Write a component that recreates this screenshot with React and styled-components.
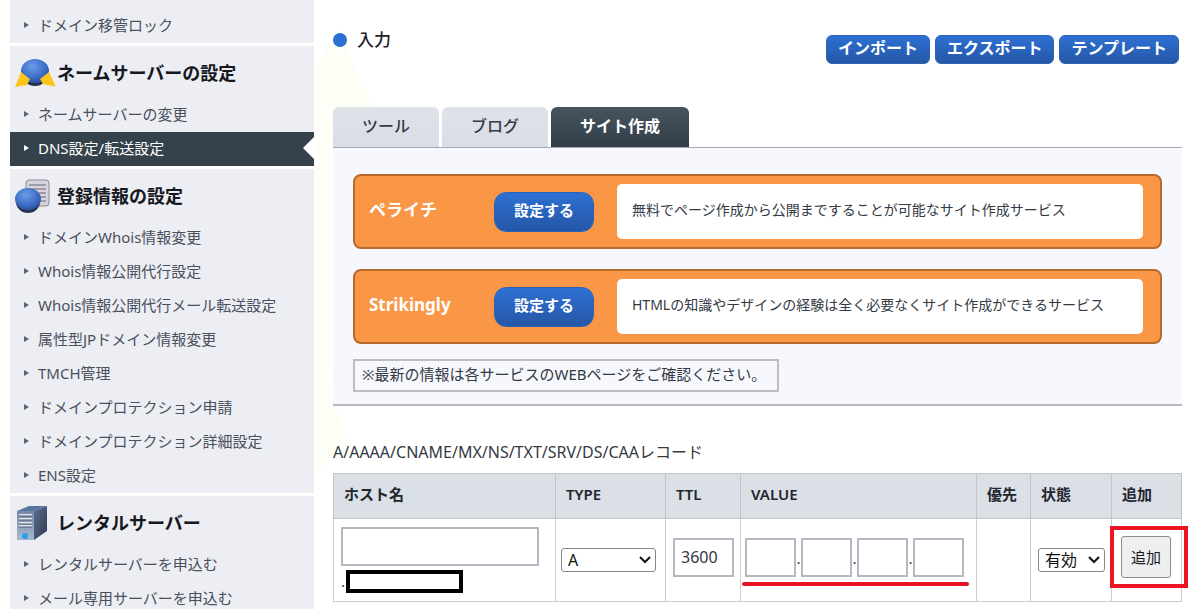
import React, { useState } from "react";
import styled, { createGlobalStyle } from "styled-components";

const GlobalStyle = createGlobalStyle`
  * {
    box-sizing: border-box;
  }
  body {
    margin: 0;
    background-color: #ffffff;
    color: #333a44;
    font-family: "Noto Sans", "Noto Sans CJK JP", sans-serif;
    font-size: 15px;
    line-height: 24px;
  }
  button, input, select {
    font-family: inherit;
  }
`;

const Page = styled.div`
  position: relative;
  display: flex;
  height: 100vh;
  padding-left: 10px;
  overflow: hidden;
`;

const Backdrop = styled.svg`
  position: absolute;
  top: 0;
  left: 315px;
  z-index: -1;
  fill: #fdfff7;
`;

const Sidebar = styled.nav`
  display: flex;
  flex-direction: column;
  flex-shrink: 0;
  gap: 3px;
  width: 304px;
`;

const Section = styled.section`
  flex-shrink: 0;
  padding-top: ${props => (props.$continued ? "9px" : "0")};
  background-color: #eceef4;
`;

const SectionTitle = styled.h2`
  display: flex;
  align-items: center;
  gap: 2px;
  height: 52px;
  margin: 0;
  padding: 2px 0 0 5px;
  color: #16181d;
  font-size: 18px;
  font-weight: 600;

  svg {
    flex-shrink: 0;
  }
`;

const Menu = styled.ul`
  margin: 0;
  padding: 0;
  list-style: none;
`;

const MenuLink = styled.a`
  display: flex;
  align-items: center;
  gap: 9px;
  height: 34px;
  padding: 0 0 2px 14px;
  background-color: ${props => (props.$active ? "#36424b" : "transparent")};
  color: ${props => (props.$active ? "#ffffff" : "#4a505b")};
  text-decoration: none;

  &::before {
    content: "";
    border-style: solid;
    border-width: 3px 0 3px 5px;
    border-color: transparent transparent transparent
      ${props => (props.$active ? "#ffffff" : "#566475")};
  }

  &::after {
    content: "";
    display: ${props => (props.$active ? "block" : "none")};
    margin-left: auto;
    border-style: solid;
    border-width: 11px 11px 11px 0;
    border-color: transparent #ffffff transparent transparent;
  }
`;

const Main = styled.main`
  flex: 1;
  min-width: 0;
  padding: 28px 18px 0 19px;
`;

const Header = styled.header`
  display: flex;
  justify-content: space-between;
  height: 79px;
`;

const Title = styled.h1`
  display: flex;
  align-items: center;
  gap: 10px;
  height: 24px;
  margin: 0;
  color: #1d2026;
  font-size: 17px;
  font-weight: 500;

  &::before {
    content: "";
    width: 14px;
    height: 14px;
    border-radius: 50%;
    background-color: #2b6fd1;
  }
`;

const Actions = styled.div`
  display: flex;
  gap: 5px;
  padding: 7px 3px 0 0;
`;

const BlueButton = styled.button`
  flex-shrink: 0;
  width: ${props => (props.$large ? "100px" : "auto")};
  height: ${props => (props.$large ? "40px" : "29px")};
  padding: ${props => (props.$large ? "0 0 3px" : "0 11px 3px")};
  border: 1px solid #2c62b4;
  border-radius: ${props => (props.$large ? "12px" : "6px")};
  background-image: linear-gradient(#2d70d4, #2557a5);
  color: #ffffff;
  font-size: ${props => (props.$large ? "15px" : "16px")};
  font-weight: 700;
  line-height: 24px;
`;

const Tabs = styled.div`
  display: flex;
  gap: 3px;
`;

const Tab = styled.button`
  height: 40px;
  padding: 0 29px 4px;
  border: 0;
  border-radius: 6px 6px 0 0;
  background-image: ${props =>
    props.$active
      ? "linear-gradient(#48545d, #323f48)"
      : "linear-gradient(#dfe2e9, #dadde5)"};
  color: ${props => (props.$active ? "#ffffff" : "#333c47")};
  font-size: 16px;
  font-weight: ${props => (props.$active ? 700 : 500)};
`;

const Panel = styled.section`
  display: flex;
  flex-direction: column;
  gap: 20px;
  padding: 26px 20px 12px;
  border-top: 1px solid #a5a9b2;
  border-bottom: 2px solid #b7bac6;
  background-color: #f7f8fd;
`;

const ServiceCard = styled.article`
  display: flex;
  align-items: center;
  height: 75px;
  padding: 0 17px 0 14px;
  border: 2px solid #b8692b;
  border-radius: 8px;
  background-color: #f99746;
`;

const ServiceName = styled.h3`
  flex-shrink: 0;
  width: 125px;
  margin: 0;
  padding-bottom: 3px;
  color: #ffffff;
  font-size: 17px;
  font-weight: 700;
`;

const ServiceText = styled.p`
  flex: 1;
  margin: 0 0 0 23px;
  padding: 14px 15px 17px;
  border-radius: 5px;
  background-color: #ffffff;
  font-size: 14px;
`;

const Note = styled.p`
  align-self: flex-start;
  width: 426px;
  margin: -5px 0 0;
  padding: 1px 7px 4px;
  border: 2px solid #bcbdbd;
`;

const RecordTable = styled.table`
  width: 100%;
  table-layout: fixed;
  border-collapse: collapse;

  caption {
    padding: 34px 0 9px;
    font-size: 16px;
    text-align: left;
  }
`;

const HeadCell = styled.th`
  width: ${props => props.$width || "auto"};
  height: 45px;
  padding: 0 0 4px 10px;
  border: 1px solid #c1c5cb;
  background-color: #dbdfe6;
  color: #22262d;
  font-weight: 600;
  text-align: left;
  white-space: nowrap;
`;

const Cell = styled.td`
  height: 83px;
  padding: ${props => props.$padding || "0 0 0 5px"};
  border: 1px solid #c9ccd1;
`;

const TextInput = styled.input.attrs({ type: "text" })`
  display: block;
  width: ${props => props.$width};
  height: 39px;
  padding: 0 6px 2px;
  border: 2px solid #b5b8c0;
  background-color: #ffffff;
  color: #333a44;
  font-size: 16px;
`;

const Domain = styled.div`
  display: flex;
  align-items: center;
  gap: 1px;
  margin-top: 4px;
  line-height: 23px;
`;

const Mask = styled.span`
  width: 117px;
  height: 23px;
  border: 4px solid #000000;
  background-color: #ffffff;
`;

const SelectBox = styled.div`
  position: relative;
  width: ${props => props.$width};

  svg {
    position: absolute;
    top: 7px;
    right: 5px;
    pointer-events: none;
  }
`;

const Select = styled.select`
  display: block;
  width: 100%;
  height: 24px;
  padding: 0 0 0 6px;
  border: 1px solid #85878b;
  border-radius: 3px;
  appearance: none;
  background-color: #ffffff;
  color: #111111;
  font-size: 16px;
  line-height: 22px;
`;

const Octets = styled.div`
  position: relative;
  display: flex;
  align-items: center;
  width: 219px;

  span {
    width: 5px;
    text-align: center;
  }
`;

const Underline = styled.div`
  position: absolute;
  top: 44px;
  right: -5px;
  left: -3px;
  height: 4px;
  border-radius: 2px;
  background-color: #ec1024;
`;

const AddBox = styled.div`
  position: relative;
  display: inline-block;
  vertical-align: top;

  &::after {
    content: "";
    position: absolute;
    inset: -10px -17px -10px -11px;
    border: 4px solid #ec1420;
    pointer-events: none;
  }
`;

const AddButton = styled.button`
  display: block;
  width: 50px;
  height: 42px;
  padding: 0;
  border: 1px solid #8c8c8e;
  border-radius: 3px;
  background-color: #efefef;
  color: #16181d;
  font-size: 15px;
`;

const Chevron = () => (
  <svg width="12" height="9" viewBox="0 0 12 9" aria-hidden="true">
    <path d="M1 2l5 5 5-5" fill="none" stroke="#111111" strokeWidth="2" />
  </svg>
);

const Ball = ({ id, cx, cy, rx, ry }) => (
  <>
    <defs>
      <radialGradient id={id} cx="42%" cy="32%" r="65%">
        <stop offset="0" stopColor="#6c9be6" />
        <stop offset="0.6" stopColor="#4374cb" />
        <stop offset="1" stopColor="#2f56a8" />
      </radialGradient>
    </defs>
    <ellipse cx={cx} cy={cy + 3} rx={rx - 1} ry={ry} fill="#27324c" />
    <ellipse cx={cx} cy={cy} rx={rx} ry={ry} fill={`url(#${id})`} />
  </>
);

const NameServerIcon = () => (
  <svg width="40" height="32" viewBox="0 0 40 32" aria-hidden="true">
    <Ball id="nameServerBall" cx={20} cy={14} rx={14} ry={12} />
    <path d="M6 15l9 7-3 6-12 2z" fill="#fbc51c" />
    <path d="M34 15l-9 7 3 5 13 3z" fill="#fbc51c" />
  </svg>
);

const RegistryIcon = () => (
  <svg width="40" height="36" viewBox="0 0 40 36" aria-hidden="true">
    <rect x="11" y="2" width="23" height="26" rx="3" fill="#d5d4dc" stroke="#8b8790" />
    <path
      d="M14 7h17M14 11h17M14 15h17M14 19h17M14 23h17"
      stroke="#67636d"
      strokeWidth="1"
    />
    <Ball id="registryBall" cx={13} cy={21} rx={13} ry={11} />
  </svg>
);

const ServerIcon = () => (
  <svg width="40" height="36" viewBox="0 0 40 36" aria-hidden="true">
    <defs>
      <linearGradient id="serverFront" x1="0" y1="0" x2="0" y2="1">
        <stop offset="0" stopColor="#7589a6" />
        <stop offset="1" stopColor="#a6b7d1" />
      </linearGradient>
      <linearGradient id="serverSide" x1="0" y1="0" x2="1" y2="1">
        <stop offset="0" stopColor="#5b6f8f" />
        <stop offset="1" stopColor="#2f3b50" />
      </linearGradient>
    </defs>
    <path d="M2 6l12-5h18l-13 5z" fill="#56759f" />
    <path d="M19 6l13-5v25l-13 9z" fill="url(#serverSide)" />
    <path d="M2 6h17v29H2z" fill="url(#serverFront)" />
    <path d="M4 10h13M4 14h13M4 18h13M4 21h13" stroke="#e3e7ed" strokeWidth="2" />
    <path d="M4 11h13M4 15h13M4 19h13M4 22h13" stroke="#4c5a70" strokeWidth="1" />
    <circle cx="10" cy="31" r="3" fill="#22a3e6" />
  </svg>
);

const sections = [
  { items: ["ドメイン移管ロック"] },
  {
    title: "ネームサーバーの設定",
    icon: <NameServerIcon />,
    items: ["ネームサーバーの変更", "DNS設定/転送設定"]
  },
  {
    title: "登録情報の設定",
    icon: <RegistryIcon />,
    items: [
      "ドメインWhois情報変更",
      "Whois情報公開代行設定",
      "Whois情報公開代行メール転送設定",
      "属性型JPドメイン情報変更",
      "TMCH管理",
      "ドメインプロテクション申請",
      "ドメインプロテクション詳細設定",
      "ENS設定"
    ]
  },
  {
    title: "レンタルサーバー",
    icon: <ServerIcon />,
    items: ["レンタルサーバーを申込む", "メール専用サーバーを申込む"]
  }
];

const services = [
  {
    name: "ペライチ",
    text: "無料でページ作成から公開まですることが可能なサイト作成サービス"
  },
  {
    name: "Strikingly",
    text: "HTMLの知識やデザインの経験は全く必要なくサイト作成ができるサービス"
  }
];

const tabs = ["ツール", "ブログ", "サイト作成"];

const useInput = defaultValue => {
  const [value, setValue] = useState(defaultValue);
  const onChange = e => setValue(e.target.value);
  return { value, onChange };
};

const SideMenu = () => (
  <Sidebar>
    {sections.map(({ title, icon, items }) => (
      <Section key={items[0]} $continued={!title}>
        {title && (
          <SectionTitle>
            {icon}
            {title}
          </SectionTitle>
        )}
        <Menu>
          {items.map(item => (
            <li key={item}>
              <MenuLink href="#" $active={item === "DNS設定/転送設定"}>
                {item}
              </MenuLink>
            </li>
          ))}
        </Menu>
      </Section>
    ))}
  </Sidebar>
);

const Octet = ({ index }) => {
  const octet = useInput("");
  return (
    <>
      {index > 0 && <span>.</span>}
      <TextInput $width="51px" aria-label={`VALUE ${index + 1}`} {...octet} />
    </>
  );
};

const Records = () => {
  const host = useInput("");
  const type = useInput("A");
  const ttl = useInput("3600");
  const status = useInput("有効");

  return (
    <RecordTable>
      <caption>A/AAAA/CNAME/MX/NS/TXT/SRV/DS/CAAレコード</caption>
      <thead>
        <tr>
          <HeadCell $width="222px">ホスト名</HeadCell>
          <HeadCell $width="110px">TYPE</HeadCell>
          <HeadCell $width="75px">TTL</HeadCell>
          <HeadCell>VALUE</HeadCell>
          <HeadCell $width="54px">優先</HeadCell>
          <HeadCell $width="81px">状態</HeadCell>
          <HeadCell $width="70px">追加</HeadCell>
        </tr>
      </thead>
      <tbody>
        <tr>
          <Cell $padding="0 0 0 7px">
            <TextInput $width="198px" aria-label="ホスト名" {...host} />
            <Domain>
              .<Mask />
            </Domain>
          </Cell>
          <Cell>
            <SelectBox $width="95px">
              <Select aria-label="TYPE" {...type}>
                <option>A</option>
                <option>AAAA</option>
                <option>CNAME</option>
                <option>MX</option>
              </Select>
              <Chevron />
            </SelectBox>
          </Cell>
          <Cell $padding="0 0 5px 7px">
            <TextInput $width="61px" aria-label="TTL" {...ttl} />
          </Cell>
          <Cell $padding="0 0 5px 4px">
            <Octets>
              {[0, 1, 2, 3].map(index => (
                <Octet key={index} index={index} />
              ))}
              <Underline />
            </Octets>
          </Cell>
          <Cell />
          <Cell $padding="0 0 0 7px">
            <SelectBox $width="67px">
              <Select aria-label="状態" {...status}>
                <option>有効</option>
                <option>無効</option>
              </Select>
              <Chevron />
            </SelectBox>
          </Cell>
          <Cell $padding="0 0 7px 9px">
            <AddBox>
              <AddButton type="button">追加</AddButton>
            </AddBox>
          </Cell>
        </tr>
      </tbody>
    </RecordTable>
  );
};

const App = () => {
  const [activeTab, setActiveTab] = useState("サイト作成");

  return (
    <Page>
      <GlobalStyle />
      <Backdrop width="885" height="609" viewBox="0 0 885 609" aria-hidden="true">
        <path d="M0 70L22 28L180 370L0 370z" />
        <path d="M0 340L36 450L0 470z" />
      </Backdrop>
      <SideMenu />
      <Main>
        <Header>
          <Title>入力</Title>
          <Actions>
            <BlueButton type="button">インポート</BlueButton>
            <BlueButton type="button">エクスポート</BlueButton>
            <BlueButton type="button">テンプレート</BlueButton>
          </Actions>
        </Header>
        <Tabs>
          {tabs.map(tab => (
            <Tab
              key={tab}
              type="button"
              $active={tab === activeTab}
              onClick={() => setActiveTab(tab)}
            >
              {tab}
            </Tab>
          ))}
        </Tabs>
        <Panel>
          {services.map(({ name, text }) => (
            <ServiceCard key={name}>
              <ServiceName>{name}</ServiceName>
              <BlueButton type="button" $large>
                設定する
              </BlueButton>
              <ServiceText>{text}</ServiceText>
            </ServiceCard>
          ))}
          <Note>※最新の情報は各サービスのWEBページをご確認ください。</Note>
        </Panel>
        <Records />
      </Main>
    </Page>
  );
};

export default App;
